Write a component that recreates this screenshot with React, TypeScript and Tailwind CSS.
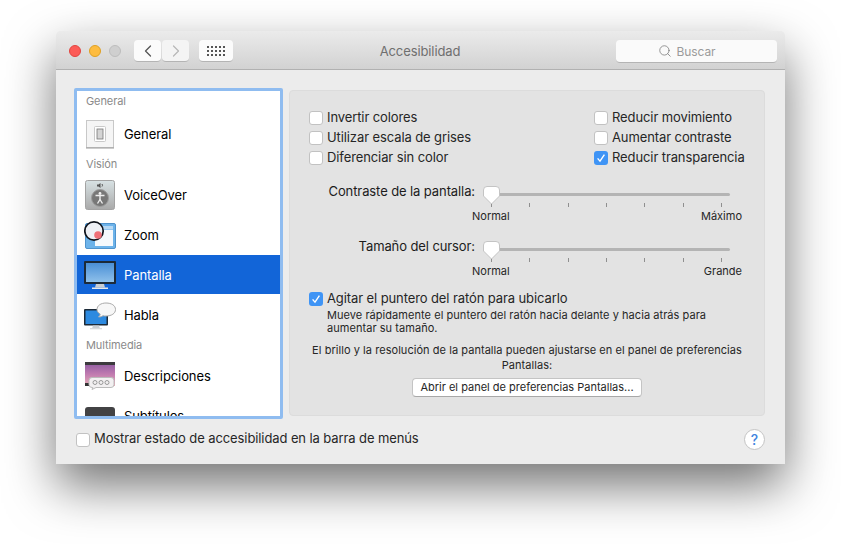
import { ChevronLeft, ChevronRight, Search } from 'lucide-react';

function Check({ on }: { on?: boolean }) {
  return on ? (
    <span className="flex h-[14px] w-[14px] shrink-0 items-center justify-center rounded-[3px] bg-[#3f94f5]">
      <svg width="10" height="10" viewBox="0 0 10 10" fill="none">
        <path d="M1.6 5.4 L4 8.2 L8.4 1.6" stroke="#fff" strokeWidth="1.4" />
      </svg>
    </span>
  ) : (
    <span className="h-[14px] w-[14px] shrink-0 rounded-[3px] border border-[#c2c2c2] bg-white" />
  );
}

function CheckRow({ label, on }: { label: string; on?: boolean }) {
  return (
    <div className="flex h-5 items-center gap-[4px] text-[13px] text-[#262626]">
      <Check on={on} />
      <span>{label}</span>
    </div>
  );
}

function Slider({ label, max }: { label: string; max: string }) {
  return (
    <div className="flex h-[55px] items-start">
      <div className="w-[166px] shrink-0 text-right text-[13px] text-[#1c1c1c]">{label}</div>
      <div className="relative ml-[8px] w-[247px] pt-[11px]">
        <div className="ml-[8px] h-[3px] rounded-full bg-[#b4b4b4]" />
        <svg className="absolute left-0 top-[4px]" width="17" height="19" viewBox="0 0 17 19">
          <path d="M4 .5h9a3.500 3.500 0 0 1 3.500 3.500v6l-8 8-8-8V4A3.500 3.500 0 0 1 4 .5z" fill="#fff" stroke="#c4c4c4" />
        </svg>
        <div className="ml-[8px] mr-[8px] mt-[7px] flex h-[4px] justify-between">
          {[0, 1, 2, 3, 4, 5, 6].map(i => (
            <span key={i} className="h-[4px] w-px bg-[#8f8f8f]" />
          ))}
        </div>
        <div className="mt-[1px] flex justify-between text-[11px] leading-[16px] tracking-normal text-[#262626]">
          <span className="-ml-[11px]">Normal</span>
          <span className="-mr-[12px]">{max}</span>
        </div>
      </div>
    </div>
  );
}

function Head({ text }: { text: string }) {
  return <div className="h-[20px] shrink-0 pl-[9px] text-[11px] leading-[20px] text-[#8a8a8a]">{text}</div>;
}

function Row({ icon, label, selected }: { icon: React.ReactNode; label: string; selected?: boolean }) {
  return (
    <div className={`flex shrink-0 items-center text-[13px] ${selected ? 'mb-px h-[39px] bg-[#1265d8] pt-[1px] text-white' : 'h-10 text-black'}`}>
      <div className="ml-[6px] flex w-[33px] shrink-0 items-center justify-center">{icon}</div>
      <span className="ml-[8px] pt-[1px]">{label}</span>
    </div>
  );
}

function GeneralIcon() {
  return (
    <svg width="28" height="29" viewBox="0 0 28 29">
      <rect x="0.5" y="0.5" width="27" height="27" fill="#f5f5f5" stroke="#c8c8c8" />
      <path d="M0 28h28" stroke="#9a9a9a" />
      <rect x="8.500" y="6.500" width="11" height="15" rx="1" fill="#fff" stroke="#c9c9c9" />
      <rect x="11" y="9" width="6" height="10" fill="#d4d4d4" stroke="#777" strokeWidth="0.8" />
    </svg>
  );
}

function VoiceOverIcon() {
  return (
    <svg width="30" height="31" viewBox="0 0 30 31">
      <defs>
        <linearGradient id="vo" x1="0" y1="0" x2="0" y2="1">
          <stop offset="0" stopColor="#d8e2e4" />
          <stop offset="1" stopColor="#a9a9a9" />
        </linearGradient>
      </defs>
      <rect x="0.5" y="0.5" width="29" height="29" rx="2" fill="url(#vo)" stroke="#a3a3a3" />
      <path d="M12 4.5h1.5l2-1.5v5l-2-1.500H12z" fill="#555" />
      <path d="M17 4a2 2 0 0 1 0 2.500" stroke="#555" fill="none" />
      <circle cx="15" cy="18" r="8.500" fill="#777" stroke="#9c9c9c" />
      <circle cx="15" cy="13.500" r="1.400" fill="#eee" />
      <path d="M10.500 15.500h9M15 15.500v4M15 19.500l-2.500 4M15 19.500l2.500 4" stroke="#eee" strokeWidth="1.400" fill="none" />
    </svg>
  );
}

function ZoomIcon() {
  return (
    <svg width="32" height="30" viewBox="0 0 32 30">
      <rect x="1.500" y="3.500" width="30" height="25" rx="1.500" fill="#6db3ea" stroke="#4f93cc" />
      <rect x="11" y="10" width="18" height="16" fill="#f6f9fc" />
      <rect x="11" y="6" width="18" height="3.500" fill="#b6d8f4" />
      <circle cx="10" cy="11" r="9.200" fill="#eef0f5" stroke="#10141c" strokeWidth="1.700" />
      <circle cx="14" cy="15" r="3.800" fill="#ef6f77" />
    </svg>
  );
}

function MonitorIcon() {
  return (
    <svg width="32" height="29" viewBox="0 0 32 29">
      <defs>
        <linearGradient id="mon" x1="0" y1="0" x2="0" y2="1">
          <stop offset="0" stopColor="#4a8fd6" />
          <stop offset="1" stopColor="#8ec0ea" />
        </linearGradient>
      </defs>
      <rect x="0" y="0" width="32" height="23" rx="1" fill="#1c2a38" />
      <rect x="2" y="2" width="28" height="19" fill="url(#mon)" />
      <path d="M12 23h8l1 3.500H11z" fill="#c9ced3" />
      <rect x="8" y="26.500" width="16" height="1.500" fill="#e7e9ea" />
    </svg>
  );
}

function SpeechIcon() {
  return (
    <svg width="32" height="29" viewBox="0 0 32 29">
      <rect x="0" y="8" width="24" height="16.500" rx="1" fill="#1c2a38" />
      <rect x="1.500" y="9.500" width="21" height="13.500" fill="#2d8ae0" />
      <path d="M9 24.500h6l.8 2.500H8.200z" fill="#c9ced3" />
      <rect x="6" y="27" width="12" height="1.300" fill="#d8dadc" />
      <path d="M22 2c5.500 0 9.500 2.500 9.500 6.500S27.500 15 22 15c-1 0-2 0-3-.3-1.500 1-3 1.400-4.500 1.300 1-.8 1.600-1.800 1.700-3-2-1-3.200-2.600-3.200-4.500C13 4.500 17 2 22 2z" fill="#f7f7f7" stroke="#aaa" />
    </svg>
  );
}

function CaptionIcon() {
  return (
    <svg width="30" height="28" viewBox="0 0 30 28">
      <defs>
        <linearGradient id="cap" x1="0" y1="0" x2="0" y2="1">
          <stop offset="0" stopColor="#8a5aa0" />
          <stop offset="0.5" stopColor="#c07ab0" />
          <stop offset="1" stopColor="#e8b0b8" />
        </linearGradient>
      </defs>
      <rect x="0" y="0" width="30" height="24" fill="url(#cap)" />
      <rect x="0" y="0" width="30" height="3" fill="#3c3a3e" />
      <rect x="0" y="21" width="4" height="3" fill="#333" />
      <path d="M7 15.500h19a3 3 0 0 1 3 3v4a3 3 0 0 1-3 3H11l-4 2 .8-2H7a3 3 0 0 1-3-3v-4a3 3 0 0 1 3-3z" fill="#f2f0f1" stroke="#bbb" />
      <circle cx="10" cy="20.500" r="2" fill="none" stroke="#999" />
      <circle cx="16" cy="20.500" r="2" fill="none" stroke="#999" />
      <circle cx="22" cy="20.500" r="2" fill="none" stroke="#999" />
    </svg>
  );
}

function SubtitleIcon() {
  return (
    <svg className="mt-[6px]" width="30" height="24" viewBox="0 0 30 24">
      <rect x="0" y="0" width="30" height="30" rx="3" fill="#424244" />
    </svg>
  );
}

export default function App() {
  return (
    <div
      className="h-[544px] w-[841px] overflow-hidden bg-white pl-[56px] pt-[31px] text-[13px] tracking-[-0.1px]"
      style={{ fontFamily: 'Inter, "Liberation Sans", sans-serif' }}
    >
      <div className="flex h-[433px] w-[729px] flex-col rounded-t-[5px] bg-[#ececec] shadow-[0_22px_50px_rgba(0,0,0,0.55)]">
        {/* Title bar */}
        <div className="flex h-[39px] shrink-0 items-center rounded-t-[5px] border-b border-[#b1b1b1] bg-gradient-to-b from-[#ebebeb] to-[#d2d2d2] pl-[13px] pr-[8px] pt-[2px]">
          <span className="h-[12px] w-[12px] rounded-full border border-[#e2443f] bg-[#fc5b57]" />
          <span className="ml-2 h-[12px] w-[12px] rounded-full border border-[#dfa023] bg-[#fdbc40]" />
          <span className="ml-2 h-[12px] w-[12px] rounded-full border border-[#bdbdbd] bg-[#cfcfcf]" />
          <div className="ml-[13px] flex gap-px">
            <button className="flex h-[22px] w-[27px] items-center justify-center rounded-[4px] border-b border-[#b4b4b4] bg-[#fbfbfb] text-[#555]">
              <ChevronLeft size={20} strokeWidth={1.5} />
            </button>
            <button className="flex h-[22px] w-[27px] items-center justify-center rounded-[4px] border-b border-[#b4b4b4] bg-[#f4f4f4] text-[#b8b8b8]">
              <ChevronRight size={20} strokeWidth={1.5} />
            </button>
          </div>
          <button className="ml-[10px] grid h-[22px] w-[34px] grid-cols-[repeat(5,2px)] content-center justify-center gap-[2px] rounded-[4px] border-b border-[#b4b4b4] bg-[#fbfbfb]">
            {Array.from({ length: 15 }).map((_, i) => (
              <span key={i} className="h-[2px] w-[2px] bg-[#555]" />
            ))}
          </button>
          <div className="flex-1 pr-[9px] pt-[2px] text-center text-[13px] text-[#6f6f6f]">Accesibilidad</div>
          <div className="flex h-[23px] w-[161px] items-center justify-center gap-[5px] rounded-[4px] border-b border-[#b4b4b4] bg-[#fafafa] pr-[20px] text-[12px] text-[#9b9b9b]">
            <Search size={14} strokeWidth={1.3} className="text-[#777]" />
            <span className="pt-[2px]">Buscar</span>
          </div>
        </div>

        {/* Body */}
        <div className="flex pl-[18px] pt-[18px]">
          <div className="flex h-[331px] w-[209px] shrink-0 flex-col overflow-hidden rounded-[2px] border-[3px] border-[#8fbcf0] bg-white">
            <Head text="General" />
            <div className="h-[3px] shrink-0" />
            <Row icon={<GeneralIcon />} label="General" />
            <Head text="Visión" />
            <div className="h-px shrink-0" />
            <Row icon={<VoiceOverIcon />} label="VoiceOver" />
            <Row icon={<ZoomIcon />} label="Zoom" />
            <Row icon={<MonitorIcon />} label="Pantalla" selected />
            <Row icon={<SpeechIcon />} label="Habla" />
            <Head text="Multimedia" />
            <div className="h-px shrink-0" />
            <Row icon={<CaptionIcon />} label="Descripciones" />
            <Row icon={<SubtitleIcon />} label="Subtítulos" />
          </div>

          <div className="ml-[6px] mt-[2px] h-[326px] w-[476px] rounded-[4px] border border-[#dcdcdc] bg-[#e3e3e3] pl-[19px] pt-[17px]">
            <div className="flex">
              <div className="w-[285px]">
                <CheckRow label="Invertir colores" />
                <CheckRow label="Utilizar escala de grises" />
                <CheckRow label="Diferenciar sin color" />
              </div>
              <div>
                <CheckRow label="Reducir movimiento" />
                <CheckRow label="Aumentar contraste" />
                <CheckRow label="Reducir transparencia" on />
              </div>
            </div>
            <div className="mt-[14px]">
              <Slider label="Contraste de la pantalla:" max="Máximo" />
              <Slider label="Tamaño del cursor:" max="Grande" />
            </div>
            <div className="-mt-[3px]">
              <CheckRow label="Agitar el puntero del ratón para ubicarlo" on />
              <div className="ml-[18px] w-[400px] text-[11px] leading-[13px] tracking-[0.05px] text-[#262626]">
                Mueve rápidamente el puntero del ratón hacia delante y hacia atrás para aumentar su tamaño.
              </div>
            </div>
            <div className="-ml-[12px] mt-[8px] w-[460px] text-center text-[11px] leading-[15px] tracking-[0.05px] text-[#262626]">
              El brillo y la resolución de la pantalla pueden ajustarse en el panel de preferencias Pantallas:
            </div>
            <div className="-ml-[12px] mt-[5px] flex w-[460px] justify-center">
              <button className="h-[19px] w-[230px] rounded-[4px] border border-[#c4c4c4] border-b-[#a8a8a8] bg-white text-[11px] leading-[17px] tracking-normal text-[#262626]">
                Abrir el panel de preferencias Pantallas...
              </button>
            </div>
          </div>
        </div>

        {/* Footer */}
        <div className="flex flex-1 items-center pb-[4px] pl-[20px] pr-[20px]">
          <Check />
          <span className="ml-[4px] pb-[1px] text-[13px] text-[#262626]">Mostrar estado de accesibilidad en la barra de menús</span>
          <button className="ml-auto flex h-[21px] w-[21px] items-center justify-center rounded-full border border-[#c4c4c4] bg-white text-[14px] font-medium text-[#3f85e0]">
            ?
          </button>
        </div>
      </div>
    </div>
  );
}
